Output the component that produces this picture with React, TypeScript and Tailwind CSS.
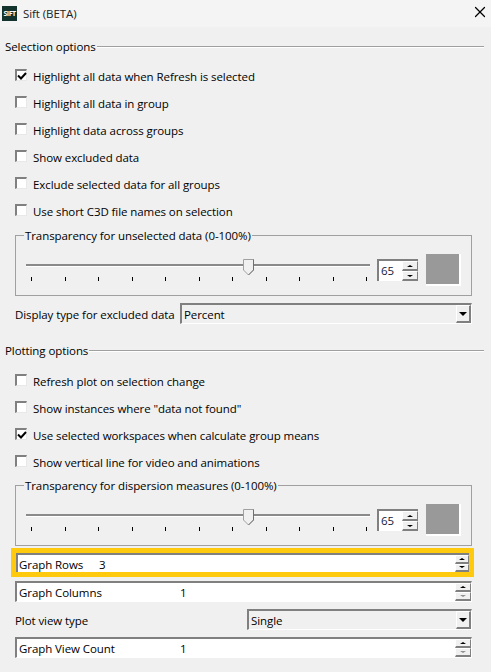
import { X } from 'lucide-react';

const ticks = [0, 1, 2, 3, 4, 5, 6, 7, 8, 9, 10];

function SectionHeader({ title }: { title: string }) {
  return (
    <div className="flex items-center h-5 pl-[5px] pr-[7px] gap-px">
      <span>{title}</span>
      <div className="flex-1 h-[2px] bg-[#a0a0a0] border-b border-white" />
    </div>
  );
}

function CheckRow({ label, checked }: { label: string; checked?: boolean }) {
  return (
    <div className="flex items-center h-[27px] pl-[15px] gap-[6px]">
      <div className="w-[12px] h-[12px] mb-[3px] bg-white border-t-2 border-l-2 border-[#808080] border-r border-b border-r-[#e8e8e8] border-b-[#e8e8e8] flex items-center justify-center">
        {checked && (
          <svg width="10" height="8" viewBox="0 0 10 8" className="shrink-0">
            <path d="M1 3.5 L4 6.5 L9 1" fill="none" stroke="#000" strokeWidth="2" />
          </svg>
        )}
      </div>
      <span>{label}</span>
    </div>
  );
}

function SpinButtons({ width, disabledDown }: { width: string; disabledDown?: boolean }) {
  return (
    <div className={`${width} flex flex-col h-full shrink-0`}>
      <div className="flex-1 bg-[#f0f0f0] border-b-2 border-r border-[#808080] border-t border-l border-t-white border-l-white flex items-center justify-center">
        <div className="w-0 h-0 border-x-[3px] border-x-transparent border-b-[2px] border-b-black" />
      </div>
      <div className="flex-1 bg-[#f0f0f0] border-b-2 border-r border-[#808080] border-t border-l border-t-white border-l-white flex items-center justify-center">
        <div
          className={
            disabledDown
              ? 'w-0 h-0 border-x-[3px] border-x-transparent border-t-[2px] border-t-[#909090]'
              : 'w-0 h-0 border-x-[3px] border-x-transparent border-t-[2px] border-t-black'
          }
        />
      </div>
    </div>
  );
}

function SliderGroup({ title }: { title: string }) {
  return (
    <div className="relative ml-[15px] w-[457px] h-[61px] border border-[#a0a0a0] flex items-start pl-[10px]">
      <span className="absolute left-[8px] -top-[8px] bg-[#f0f0f0] px-px leading-[16px]">{title}</span>
      <div className="relative w-[344px] h-full shrink-0">
        <div className="absolute left-0 right-0 top-[28px] h-[3px] bg-[#8a8a8a] border-b border-white" />
        <svg width="11" height="17" viewBox="0 0 11 17" className="absolute left-[217px] top-[23px]">
          <path d="M0.5 0.5 H10.5 V11 L5.5 16 L0.5 11 Z" fill="#f0f0f0" stroke="#a0a0a0" />
          <path d="M10.5 0.5 V11 L5.5 16" fill="none" stroke="#707070" />
        </svg>
        <div className="absolute left-[5px] top-[41px] flex gap-[32.5px]">
          {ticks.map((t) => (
            <div key={t} className="w-px h-[4px] bg-black" />
          ))}
        </div>
      </div>
      <div className="ml-[7px] mt-[23px] w-[41px] h-[22px] flex bg-white border-t-2 border-l-2 border-[#808080] shrink-0">
        <span className="w-[23px] pl-[2px] leading-[20px] text-[#10203c]">65</span>
        <SpinButtons width="w-[16px]" />
      </div>
      <div className="ml-[8px] mt-[18px] w-[35px] h-[32px] bg-[#999999] border-r-2 border-b-2 border-white shrink-0" />
    </div>
  );
}

function Combo({ value, width }: { value: string; width: string }) {
  return (
    <div className={`${width} h-[21px] flex items-center bg-[#f0f0f0] border-t-2 border-l-2 border-[#808080] border-r border-b border-r-white border-b-white shrink-0`}>
      <span className="flex-1 pl-[2px] pt-[2px] leading-[18px]">{value}</span>
      <div className="w-[15px] h-full bg-[#f0f0f0] border-r-2 border-b-2 border-[#808080] border-t border-l border-t-white border-l-white flex items-center justify-center">
        <div className="w-0 h-0 border-x-[4px] border-x-transparent border-t-[4px] border-t-black" />
      </div>
    </div>
  );
}

function NumberRow({ label, value }: { label: string; value: string }) {
  return (
    <div className="ml-[15px] w-[457px] h-[21px] flex bg-white border-t-2 border-l-2 border-[#808080] border-r border-b border-r-white border-b-white">
      <span className="w-[163px] pl-[2px] leading-[20px] shrink-0">{label}</span>
      <span className="flex-1 leading-[20px]">{value}</span>
      <SpinButtons width="w-[16px]" disabledDown />
    </div>
  );
}

export default function App() {
  return (
    <div className="w-[491px] h-[672px] overflow-hidden bg-[#f0f0f0] text-black text-[11.5px] font-['Open_Sans',sans-serif] tracking-[-0.08px] whitespace-nowrap">
      {/* Title bar */}
      <div className="h-[27px] bg-[#f4f4f4] flex items-center pl-[2px] pr-[2px]">
        <div className="w-[15px] h-[15px] bg-[#12332e] text-white text-[7px] font-bold leading-[15px] text-center tracking-[-0.5px] overflow-hidden">
          SIFT
        </div>
        <span className="ml-[6px] flex-1 text-[#222222]">Sift (BETA)</span>
        <X className="w-[18px] h-[18px] mb-[3px] text-black" strokeWidth={1.6} />
      </div>

      {/* Selection options */}
      <div className="mt-[10px]">
        <SectionHeader title="Selection options" />
      </div>
      <div className="mt-[6px]">
        <CheckRow label="Highlight all data when Refresh is selected" checked />
        <CheckRow label="Highlight all data in group" />
        <CheckRow label="Highlight data across groups" />
        <CheckRow label="Show excluded data" />
        <CheckRow label="Exclude selected data for all groups" />
        <CheckRow label="Use short C3D file names on selection" />
      </div>
      <div className="mt-[10px]">
        <SliderGroup title="Transparency for unselected data (0-100%)" />
      </div>
      <div className="mt-[7px] ml-[15px] w-[457px] flex items-center justify-between">
        <span className="pt-[2px]">Display type for excluded data</span>
        <Combo value="Percent" width="w-[292px]" />
      </div>

      {/* Plotting options */}
      <div className="mt-[17px]">
        <SectionHeader title="Plotting options" />
      </div>
      <div className="mt-[7px]">
        <CheckRow label="Refresh plot on selection change" />
        <CheckRow label={'Show instances where "data not found"'} />
        <CheckRow label="Use selected workspaces when calculate group means" checked />
        <CheckRow label="Show vertical line for video and animations" />
      </div>
      <div className="mt-[9px]">
        <SliderGroup title="Transparency for dispersion measures (0-100%)" />
      </div>

      {/* Graph fields */}
      <div className="mt-[2px] ml-[11px] w-[463px] h-[29px] border-[5px] border-[#ffc90e] bg-white">
        <div className="h-full flex border-t-2 border-l-2 border-[#808080]">
          <span className="w-[81px] pl-[1px] leading-[19px] shrink-0">Graph Rows</span>
          <span className="flex-1 leading-[19px]">3</span>
          <SpinButtons width="w-[14px]" />
        </div>
      </div>
      <div className="mt-[4px]">
        <NumberRow label="Graph Columns" value="1" />
      </div>
      <div className="mt-[7px] ml-[15px] w-[457px] flex items-center justify-between">
        <span className="pt-[2px]">Plot view type</span>
        <Combo value="Single" width="w-[225px]" />
      </div>
      <div className="mt-[7px]">
        <NumberRow label="Graph View Count" value="1" />
      </div>
    </div>
  );
}
